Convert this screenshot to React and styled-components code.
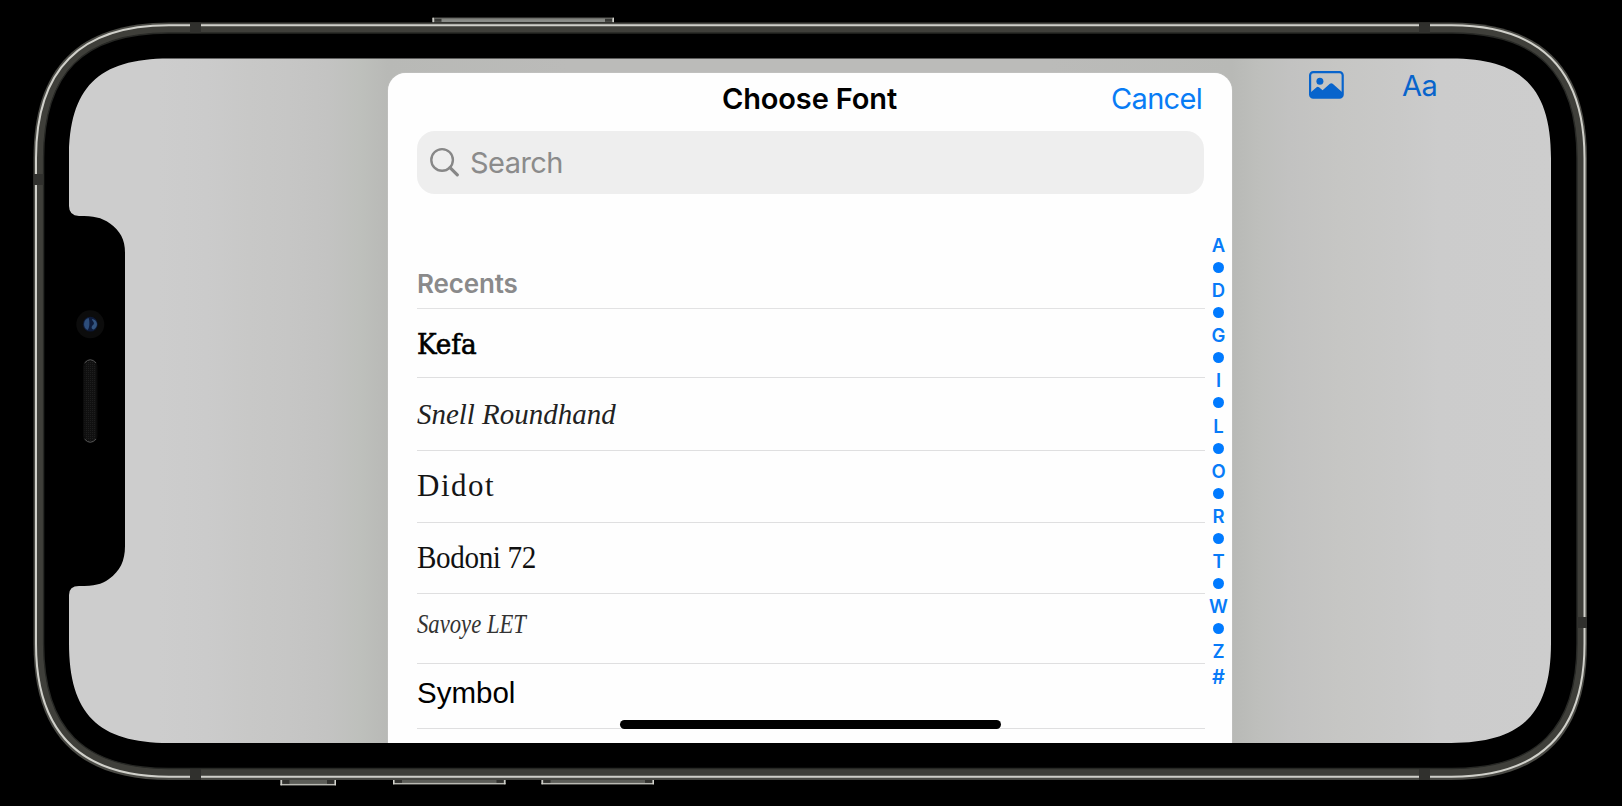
import React from "react";
import styled, { createGlobalStyle } from "styled-components";

const Global = createGlobalStyle`
  *, *::before, *::after { box-sizing: border-box; }
  body { margin: 0; background: #000; overflow: hidden; }
`;

const sans = `Inter, "Liberation Sans", sans-serif`;
const serif = `"Liberation Serif", serif`;

/* One rectangle with continuous corners: a is where the curve starts, b is its control point. */
const smooth = (x, y, w, h, a, b) => {
  const R = x + w, B = y + h;
  return `M${x + a} ${y} H${R - a} C${R - b} ${y} ${R} ${y + b} ${R} ${y + a} V${B - a} C${R} ${B - b} ${R - b} ${B} ${R - a} ${B} H${x + a} C${x + b} ${B} ${x} ${B - b} ${x} ${B - a} V${y + a} C${x} ${y + b} ${x + b} ${y} ${x + a} ${y} Z`;
};

const screenPath =
  "M100 0.6 H1382 C1452.9 0.6 1482 29.7 1482 100.6 V585 C1482 655.9 1452.9 685 1382 685 H100 C29.1 685 0 655.9 0 585 " +
  "V537 Q0 528 10 528 C26 528 32 526.5 40 521 C51 513 56 503 56 488 V195 C56 181 51 173 41 165.5 C32 159.2 25 158 10 158 Q0 157.5 0 148 " +
  "V100.6 C0 29.7 29.1 0.6 100 0.6 Z";

const Stage = styled.main`
  position: relative;
  width: 1622px;
  height: 806px;
  background: #000;
  font-family: ${sans};
  padding: 58px 71px 63px 69px;
`;

const DeviceArt = styled.svg`
  position: absolute;
  inset: 0;
  pointer-events: none;
`;

const Screen = styled.section`
  position: relative;
  display: grid;
  grid-template-columns: 319px 844px 1fr;
  width: 1482px;
  height: 685px;
  background: linear-gradient(
    90deg,
    #cdcdcd 0, #cdcdcd 90px, #cbcbcb 138px, #c8c8c7 180px, #c6c6c5 220px, #c3c3c2 260px, #bec0bc 290px, #b8b9b6 319px,
    #bbbbb9 500px, #bbbbb9 980px, #b8b9b6 1163px, #bebfbc 1190px, #c2c2c1 1220px, #c6c6c4 1270px, #c9c9c8 1330px, #cccccc 1370px, #cdcdcd 100%
  );
  clip-path: path("${screenPath}");
`;

const Sheet = styled.section`
  grid-column: 2;
  display: flex;
  flex-direction: column;
  position: relative;
  margin-top: 14.5px;
  background: #fefefe;
  border-radius: 18px 18px 0 0;
  box-shadow: 0 0 1px #eee;
`;

const SheetHeader = styled.header`
  display: grid;
  grid-template-columns: 1fr auto 1fr;
  align-items: center;
  height: 58px;
  padding: 0 30px 5px 29px;
`;

const Title = styled.h1`
  grid-column: 2;
  margin: 0;
  font-size: 29px;
  line-height: 36px;
  font-weight: 600;
  letter-spacing: -0.13px;
  color: #000;
`;

const CancelButton = styled.button`
  justify-self: end;
  border: 0;
  padding: 0;
  background: none;
  font: 400 29px/36px ${sans};
  letter-spacing: -0.7px;
  color: #087cf5;
`;

const SearchField = styled.label`
  display: flex;
  align-items: center;
  gap: 10px;
  height: 63px;
  margin: 0 28px 0 29px;
  padding: 0 13px;
  border-radius: 18px;
  background: #eeeeee;
  color: #8b8b8b;
  font-size: 29px;
  letter-spacing: -0.55px;
`;

const SectionTitle = styled.h2`
  display: flex;
  align-items: flex-end;
  height: 115px;
  margin: 0 27px 0 29px;
  padding-bottom: 8px;
  border-bottom: 1.5px solid #e2e2e3;
  font-size: 26px;
  line-height: 32px;
  font-weight: 600;
  letter-spacing: -0.15px;
  color: #8a8a8b;
`;

const FontList = styled.ul`
  list-style: none;
  margin: 0 27px 0 29px;
  padding: 0;
`;

const FontRow = styled.li`
  display: flex;
  align-items: flex-start;
  height: ${(p) => p.$height}px;
  padding-top: ${(p) => p.$top}px;
  border-bottom: 1px solid #dfdfe0;
`;

const FontName = styled.span`
  display: block;
  white-space: nowrap;
  font-family: ${(p) => p.$family};
  font-size: ${(p) => p.$size}px;
  line-height: 40px;
  font-style: ${(p) => (p.$italic ? "italic" : "normal")};
  letter-spacing: ${(p) => p.$spacing || 0}px;
  color: ${(p) => p.$ink || "#000"};
  -webkit-text-stroke: ${(p) => p.$stroke || 0}px currentColor;
  transform: scaleX(${(p) => p.$stretch || 1});
  transform-origin: 0 50%;
`;

const AlphabetIndex = styled.nav`
  position: absolute;
  top: 161px;
  right: 0;
  width: 27px;
  display: flex;
  flex-direction: column;
  align-items: center;
`;

const IndexLetter = styled.span`
  display: flex;
  align-items: center;
  justify-content: center;
  height: 22.6px;
  margin-top: ${(p) => p.$gap || 0}px;
  font-size: ${(p) => p.$size || 18.5}px;
  font-weight: 600;
  color: #087bf8;
`;

const IndexDot = styled.span`
  width: 11px;
  height: 11px;
  margin: 5.8px 0;
  border-radius: 50%;
  background: #007aff;
`;

const HomeIndicator = styled.div`
  position: absolute;
  left: 232px;
  bottom: 14px;
  width: 381px;
  height: 9px;
  border-radius: 5px;
  background: #000;
`;

const Toolbar = styled.aside`
  grid-column: 3;
  display: flex;
  align-items: flex-start;
  padding: 13px 0 0 76.5px;
  color: #0864cc;
`;

const TextStyle = styled.span`
  margin: -3px 0 0 58.5px;
  font-size: 29px;
  line-height: 36px;
  letter-spacing: -0.4px;
`;

const fonts = [
  { name: "Kefa", height: 69.5, top: 16.5, size: 27, family: `"DejaVu Serif Condensed", "DejaVu Serif", serif`, stretch: 1.08, stroke: 0.6 },
  { name: "Snell Roundhand", height: 72.5, top: 16, size: 30, family: serif, italic: true, stretch: 0.965, ink: "#222" },
  { name: "Didot", height: 72, top: 15.5, size: 31, family: serif, spacing: 1.5, ink: "#151515" },
  { name: "Bodoni 72", height: 71, top: 15.5, size: 31, family: serif, spacing: -0.4, stretch: 0.94, ink: "#111" },
  { name: "Savoye LET", height: 70.5, top: 10, size: 27, family: serif, italic: true, stretch: 0.84, ink: "#333" },
  { name: "Symbol", height: 65, top: 8.5, size: 29.5, family: `"Liberation Sans", sans-serif` },
];

const letters = ["A", "D", "G", "I", "L", "O", "R", "T", "W", "Z"];

const SideButton = ({ x, y, w, h, up }) => (
  <g>
    <rect x={x} y={y} width={w} height={h} fill={up ? "#8a8c88" : "#5c5d58"} />
    <rect x={x} y={up ? y : y + h - 1.4} width={w} height="1.4" fill={up ? "#6d6e6a" : "#b9b9b3"} />
    <rect x={x + 2} y={up ? y + 1 : y} width="7" height={h - 1.4} fill="#252523" opacity="0.8" />
    <rect x={x + w - 9} y={up ? y + 1 : y} width="7" height={h - 1.4} fill="#252523" opacity="0.8" />
    <path d={`M${x + 0.7} ${y} V${y + h} M${x + w - 0.7} ${y} V${y + h}`} stroke="#d4d4ce" strokeWidth="1.4" />
  </g>
);

const PhoneBody = () => (
  <DeviceArt width="1622" height="806" viewBox="0 0 1622 806">
    <SideButton x={432.5} y={17.8} w={181.5} h={4.4} up />
    <SideButton x={280.5} y={780} w={55.5} h={5.3} />
    <SideButton x={393} y={780} w={112.5} h={4.3} />
    <SideButton x={541.5} y={780} w={112.5} h={4.3} />
    <path d={smooth(33.5, 22.5, 1553.5, 757.5, 136, 45)} fill="#4a4a45" />
    <path d={smooth(36, 25.3, 1548.5, 751.4, 133, 44)} fill="#3f3f3a" stroke="#d0d0ca" strokeWidth="2" />
    <path d={smooth(43.6, 33, 1533.4, 735.5, 125, 40)} fill="#000" stroke="#272825" strokeWidth="1.4" />
    <g fill="#30302d">
      <rect x="190" y="22.5" width="11" height="10.5" />
      <rect x="1419" y="22.5" width="11" height="10.5" />
      <rect x="190" y="769" width="11" height="11" />
      <rect x="1419" y="769" width="11" height="11" />
      <rect x="33.5" y="174" width="10" height="11" />
      <rect x="1577" y="617" width="10" height="11" />
    </g>
  </DeviceArt>
);

const NotchHardware = () => (
  <DeviceArt width="1622" height="806" viewBox="0 0 1622 806">
    <defs>
      <pattern id="mesh" width="2" height="2" patternUnits="userSpaceOnUse">
        <rect width="2" height="2" fill="#101010" />
        <rect width="1" height="1" fill="#1e1e1e" />
      </pattern>
    </defs>
    <circle cx="90.3" cy="324.3" r="14" fill="#0c0c0c" />
    <circle cx="90.3" cy="324.2" r="7.4" fill="#0e1b3a" />
    <path d="M88.7 318 C83 319 82.3 328 87.7 330 C90 327 89.6 321 88.7 318Z" fill="#2d4d7a" />
    <path d="M91.8 319 C98 319.5 98.6 327 93.8 329.4 C91 329.5 91 326 93.5 324.5 C95 322.5 92.5 321.5 91.8 319Z" fill="#33547f" />
    <rect x="83" y="359" width="14.5" height="84" rx="7" fill="#0b0b0b" />
    <rect x="84.5" y="361" width="11.5" height="80" rx="5.7" fill="url(#mesh)" />
    <path d="M84.6 363 Q90.2 356.5 96 363 M84.6 439 Q90.2 445.5 96 439" fill="none" stroke="#555" strokeWidth="1" />
  </DeviceArt>
);

const SearchIcon = () => (
  <svg width="30" height="30" viewBox="0 0 30 30" fill="none" stroke="#878787" strokeLinecap="round">
    <circle cx="12.1" cy="12.9" r="10.8" strokeWidth="2.4" />
    <path d="M20 20.6 L27.3 27.8" strokeWidth="3.2" />
  </svg>
);

const PictureIcon = () => (
  <svg width="35" height="28" viewBox="0 0 35 28">
    <rect x="1.1" y="1.1" width="32.6" height="25.6" rx="3.2" fill="none" stroke="currentColor" strokeWidth="2.2" />
    <circle cx="10.9" cy="10.3" r="3.5" fill="currentColor" />
    <path d="M1.5 21.5 L7.6 16.3 Q8.8 15.4 10 16.3 L13.6 19.2 L20.9 12.7 Q22.3 11.6 23.7 12.7 L33.3 21.3 V24 Q33 26.8 30 26.8 H4.5 Q1.5 26.8 1.5 24 Z" fill="currentColor" />
  </svg>
);

export default function App() {
  return (
    <Stage>
      <Global />
      <PhoneBody />
      <Screen>
        <Sheet>
          <SheetHeader>
            <Title>Choose Font</Title>
            <CancelButton>Cancel</CancelButton>
          </SheetHeader>
          <SearchField>
            <SearchIcon />
            Search
          </SearchField>
          <SectionTitle>Recents</SectionTitle>
          <FontList>
            {fonts.map((f) => (
              <FontRow key={f.name} $height={f.height} $top={f.top}>
                <FontName $family={f.family} $size={f.size} $italic={f.italic} $spacing={f.spacing} $ink={f.ink} $stretch={f.stretch} $stroke={f.stroke}>
                  {f.name}
                </FontName>
              </FontRow>
            ))}
          </FontList>
          <AlphabetIndex>
            {letters.map((l, i) => (
              <React.Fragment key={l}>
                <IndexLetter>{l}</IndexLetter>
                {i < letters.length - 1 && <IndexDot />}
              </React.Fragment>
            ))}
            <IndexLetter $size={20} $gap={2.5}>#</IndexLetter>
          </AlphabetIndex>
          <HomeIndicator />
        </Sheet>
        <Toolbar>
          <PictureIcon />
          <TextStyle>Aa</TextStyle>
        </Toolbar>
      </Screen>
      <NotchHardware />
    </Stage>
  );
}
